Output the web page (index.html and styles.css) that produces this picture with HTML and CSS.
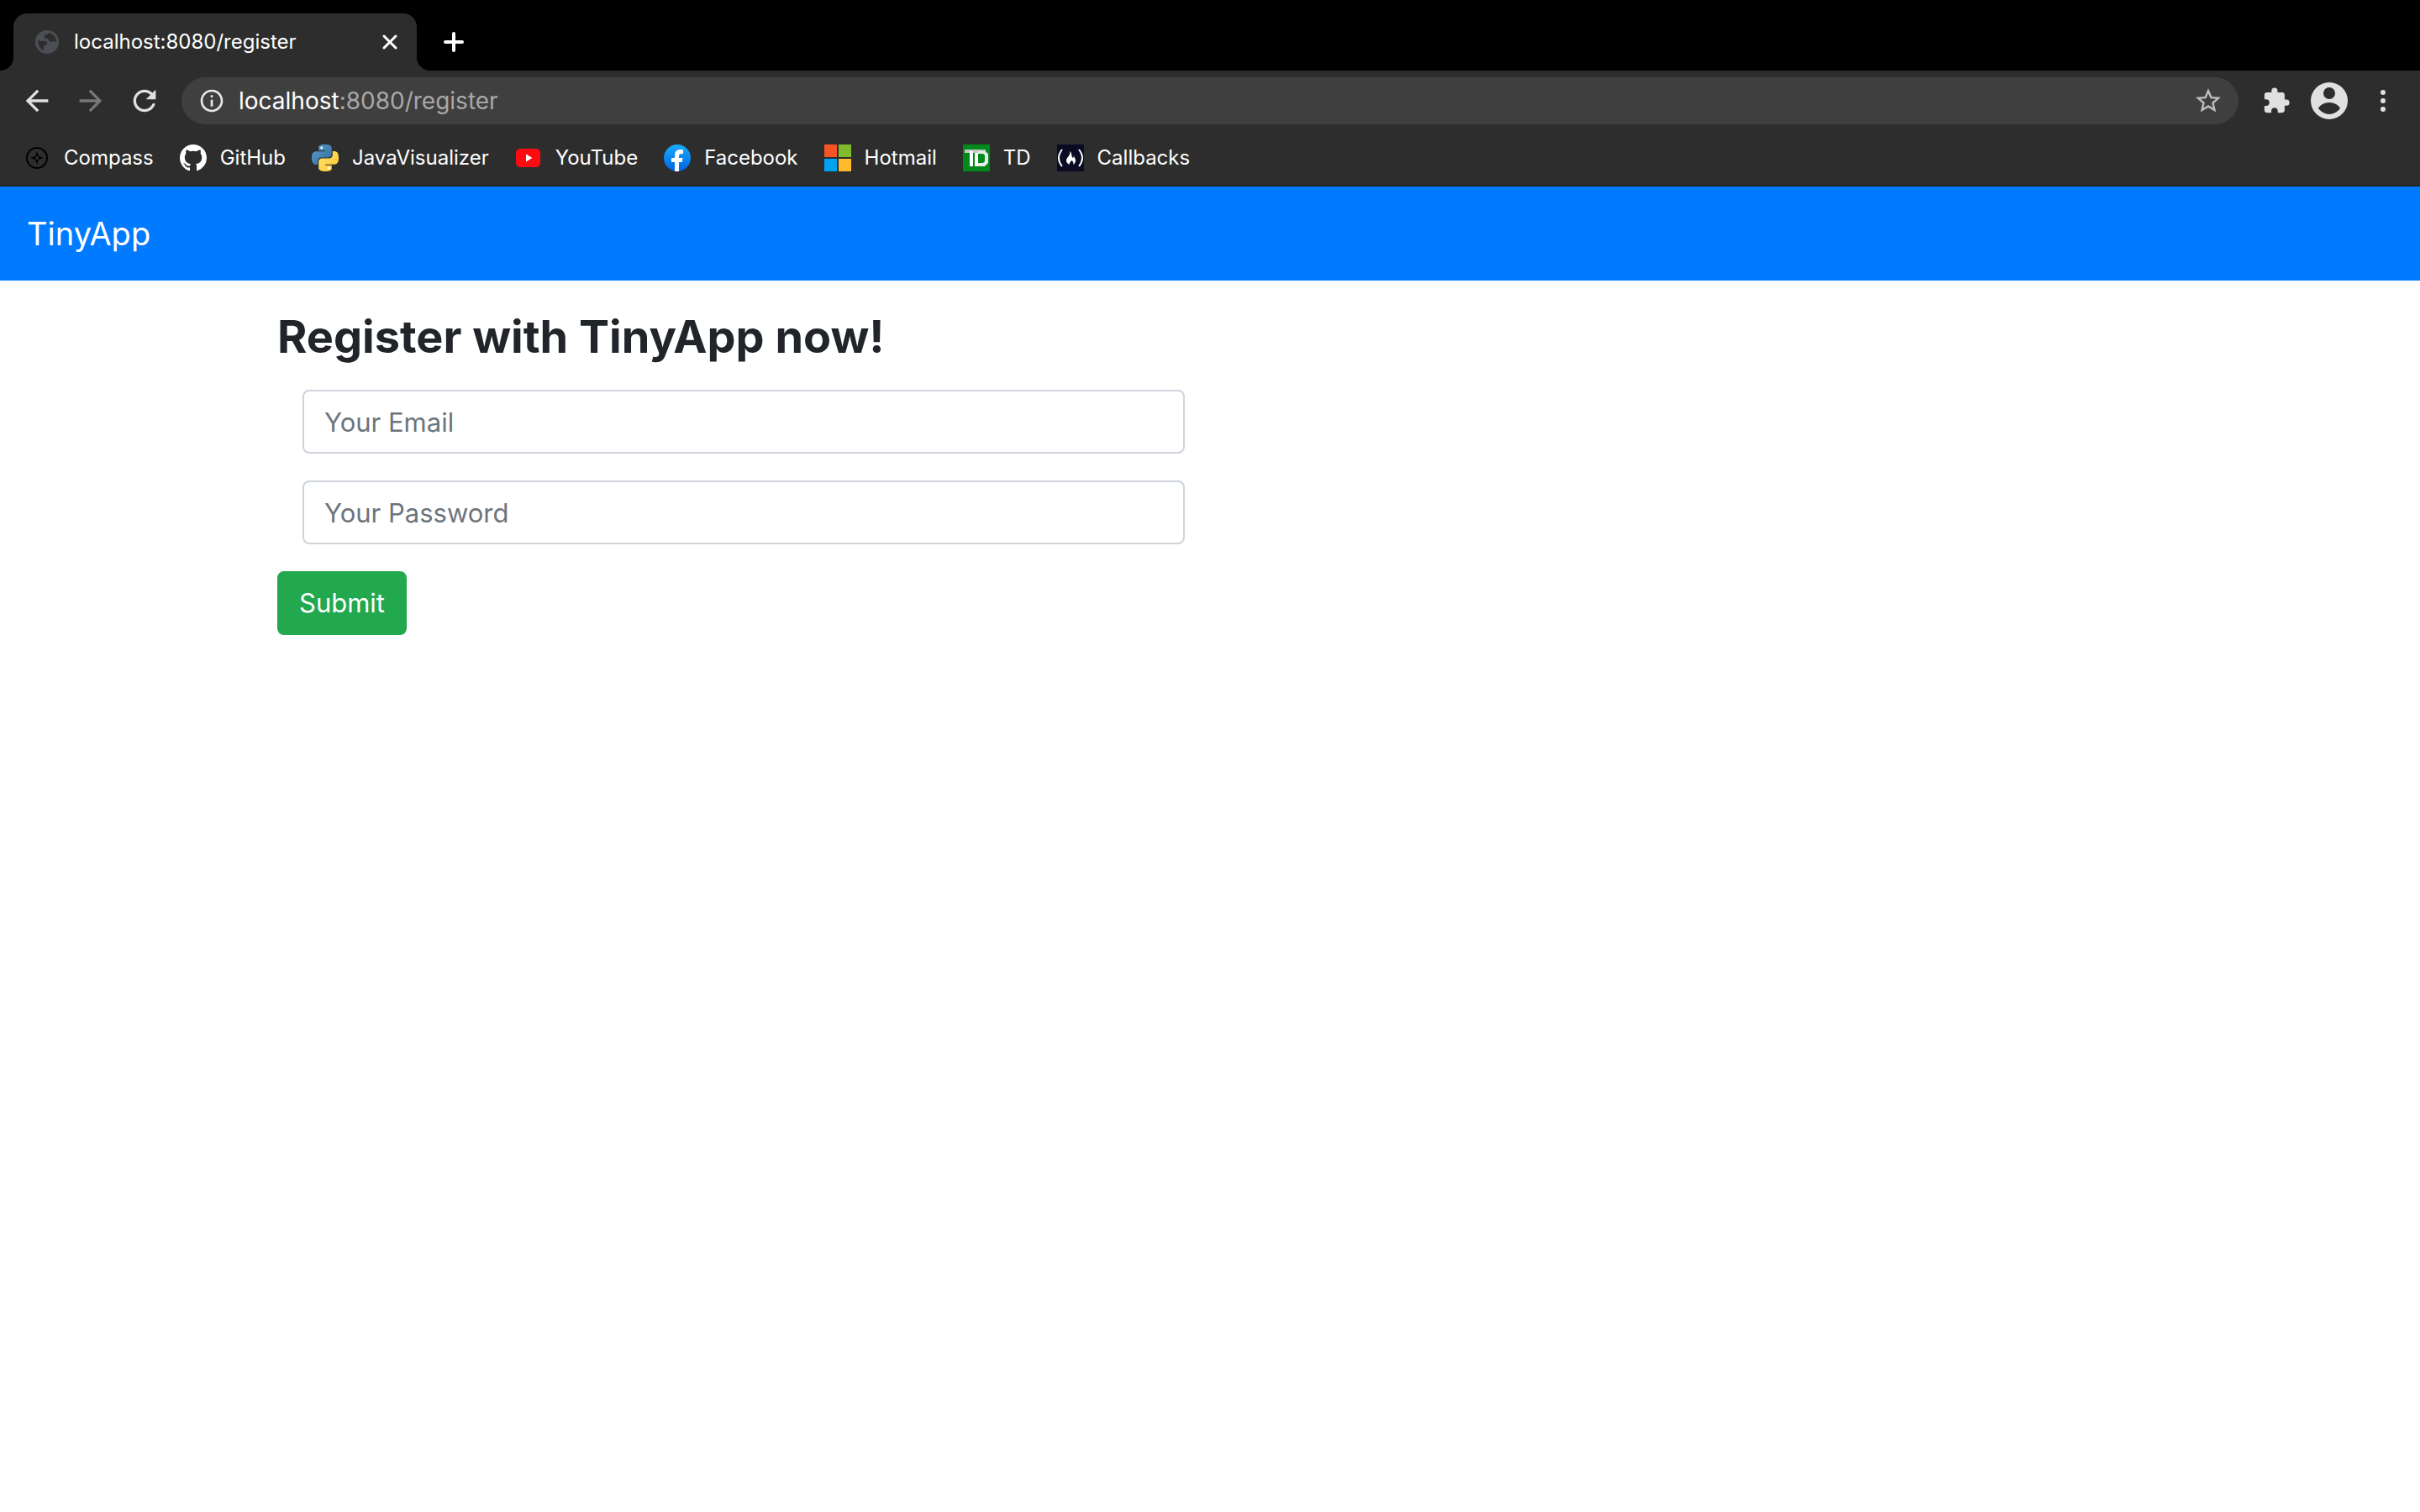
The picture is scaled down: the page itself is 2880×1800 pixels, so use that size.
FILE: index.html
```html
<!DOCTYPE html>
<html lang="en">
<head>
<meta charset="utf-8">
<title>TinyApp</title>
<link rel="stylesheet" href="styles.css">
</head>
<body>
<header class="browser">
  <div class="tabstrip">
    <div class="tab">
      <svg class="tab-icon" viewBox="0 0 28 28" aria-hidden="true"><circle cx="14" cy="14" r="14" fill="#4b4f55"/><path d="M3 12c2 1 5 1 8 1 2 0 3 1 3 3 0 1-1 2-2 2h-2v6c-4-2-7-5-7-12zM16 3c-1 1-1 2-3 2s-2 1-2 3 1 2 3 2 2 4 4 4c2 0 2-1 4-1s2 1 3 2c1-5-3-11-9-12z" fill="#2d2d2d"/></svg>
      <span class="tab-title">localhost:8080/register</span>
      <button class="icon-button tab-close" type="button" aria-label="Close tab"><svg width="20" height="20" viewBox="0 0 20 20"><path d="M3 3l14 14M17 3L3 17" stroke="#fff" stroke-width="3" stroke-linecap="round"/></svg></button>
    </div>
    <button class="icon-button new-tab" type="button" aria-label="New tab"><svg width="24" height="24" viewBox="0 0 24 24"><path d="M12 2v20M2 12h20" stroke="#fff" stroke-width="4" stroke-linecap="round"/></svg></button>
  </div>
  <div class="toolbar">
    <div class="nav-buttons">
      <button class="icon-button" type="button" aria-label="Back"><svg width="40" height="40" viewBox="0 0 24 24" fill="#e0e0e0"><path d="M20 11H7.83l5.59-5.59L12 4l-8 8 8 8 1.41-1.41L7.83 13H20z"/></svg></button>
      <button class="icon-button" type="button" aria-label="Forward"><svg width="40" height="40" viewBox="0 0 24 24" fill="#777"><path d="M4 11h12.17l-5.59-5.59L12 4l8 8-8 8-1.41-1.41L16.17 13H4z"/></svg></button>
      <button class="icon-button" type="button" aria-label="Reload"><svg width="40" height="40" viewBox="0 0 24 24" fill="#e0e0e0"><path d="M17.65 6.35C16.2 4.9 14.21 4 12 4c-4.42 0-7.99 3.58-7.99 8s3.57 8 7.99 8c3.73 0 6.84-2.55 7.73-6h-2.08c-.82 2.33-3.04 4-5.65 4-3.31 0-6-2.69-6-6s2.69-6 6-6c1.66 0 3.14.69 4.22 1.78L13 11h7V4z"/></svg></button>
    </div>
    <div class="omnibox">
      <svg width="32" height="32" viewBox="0 0 24 24" fill="#e8e8e8" aria-hidden="true"><path d="M11 7h2v2h-2zm0 4h2v6h-2zm1-9C6.48 2 2 6.48 2 12s4.48 10 10 10 10-4.48 10-10S17.52 2 12 2zm0 18c-4.41 0-8-3.59-8-8s3.59-8 8-8 8 3.59 8 8-3.59 8-8 8z"/></svg>
      <div class="url" role="textbox" aria-label="Address" contenteditable="true" spellcheck="false"><span class="url-host">localhost</span>:8080/register</div>
      <button class="icon-button" type="button" aria-label="Bookmark this page"><svg width="36" height="36" viewBox="0 0 24 24" fill="#bdbdbd"><path d="M22 9.24l-7.19-.62L12 2 9.19 8.63 2 9.24l5.46 4.73L5.82 21 12 17.27 18.18 21l-1.63-7.03zM12 15.4l-3.76 2.27 1-4.28-3.32-2.88 4.38-.38L12 6.1l1.71 4.04 4.38.38-3.32 2.88 1 4.28z"/></svg></button>
    </div>
    <div class="actions">
      <button class="icon-button" type="button" aria-label="Extensions"><svg width="34" height="34" viewBox="0 0 24 24" fill="#e0e0e0"><path d="M20.5 11H19V7c0-1.1-.9-2-2-2h-4V3.5a2.5 2.5 0 0 0-5 0V5H4c-1.1 0-1.99.9-1.99 2v3.8H3.5c1.49 0 2.7 1.21 2.7 2.7s-1.21 2.7-2.7 2.7H2V20c0 1.1.9 2 2 2h3.8v-1.5c0-1.49 1.21-2.7 2.7-2.7s2.7 1.21 2.7 2.7V22H17c1.1 0 2-.9 2-2v-4h1.5a2.5 2.5 0 0 0 0-5z"/></svg></button>
      <button class="icon-button" type="button" aria-label="Profile"><svg width="44" height="44" viewBox="0 0 44 44"><circle cx="22" cy="22" r="22" fill="#e0e0e0"/><circle cx="22" cy="13" r="7" fill="#2d2d2d"/><path d="M9 31c2-4 7-7 13-7s11 3 13 7c-3 4-8 7-13 7s-10-3-13-7z" fill="#2d2d2d"/></svg></button>
      <button class="icon-button" type="button" aria-label="Menu"><svg width="28" height="28" viewBox="0 0 28 28" fill="#e0e0e0"><circle cx="14" cy="4" r="3"/><circle cx="14" cy="14" r="3"/><circle cx="14" cy="24" r="3"/></svg></button>
    </div>
  </div>
  <nav class="bookmarks" aria-label="Bookmarks">
    <a class="bookmark" href="#"><svg width="32" height="32" viewBox="0 0 32 32"><circle cx="16" cy="16" r="12" fill="none" stroke="#000" stroke-width="2"/><path d="M16 8l2 6 6 2-6 2-2 6-2-6-6-2 6-2z" fill="#000"/><circle cx="16" cy="16" r="2" fill="#2d2d2d"/></svg>Compass</a>
    <a class="bookmark" href="#"><svg width="32" height="32" viewBox="0 0 16 16" fill="#fff"><path d="M8 0C3.58 0 0 3.58 0 8c0 3.54 2.29 6.53 5.47 7.59.4.07.55-.17.55-.38 0-.19-.01-.82-.01-1.49-2.01.37-2.53-.49-2.69-.94-.09-.23-.48-.94-.82-1.13-.28-.15-.68-.52-.01-.53.63-.01 1.08.58 1.23.82.72 1.21 1.87.87 2.33.66.07-.52.28-.87.51-1.07-1.78-.2-3.64-.89-3.64-3.95 0-.87.31-1.59.82-2.15-.08-.2-.36-1.02.08-2.12 0 0 .67-.21 2.2.82.64-.18 1.32-.27 2-.27s1.36.09 2 .27c1.53-1.04 2.2-.82 2.2-.82.44 1.1.16 1.92.08 2.12.51.56.82 1.27.82 2.15 0 3.07-1.87 3.75-3.65 3.95.29.25.54.73.54 1.48 0 1.07-.01 1.93-.01 2.2 0 .21.15.46.55.38A8.01 8.01 0 0 0 16 8c0-4.42-3.58-8-8-8z"/></svg>GitHub</a>
    <a class="bookmark" href="#"><svg width="32" height="32" viewBox="0 0 24 24"><defs><linearGradient id="py-blue" x2="1" y2="1"><stop stop-color="#5a9fd4"/><stop offset="1" stop-color="#306998"/></linearGradient><linearGradient id="py-yellow" x2="1" y2="1"><stop stop-color="#ffe873"/><stop offset="1" stop-color="#ffc331"/></linearGradient></defs><path fill="url(#py-blue)" d="M14.25.18l.9.2.73.26.59.3.45.32.34.34.25.34.16.33.1.3.04.26.02.2-.01.13V8.5l-.05.63-.13.55-.21.46-.26.38-.3.31-.33.25-.35.19-.35.14-.33.1-.3.07-.26.04-.21.02H8.77l-.69.05-.59.14-.5.22-.41.27-.33.32-.27.35-.2.36-.15.37-.1.35-.07.32-.04.27-.02.21v3.06H3.17l-.21-.03-.28-.07-.32-.12-.35-.18-.36-.26-.36-.36-.35-.46-.32-.59-.28-.73-.21-.88-.14-1.05-.05-1.23.06-1.22.16-1.04.24-.87.32-.71.36-.57.4-.44.42-.33.42-.24.4-.16.36-.1.32-.05.24-.01h.16l.06.01h8.16v-.83H6.18l-.01-2.75-.02-.37.05-.34.11-.31.17-.28.25-.26.31-.23.38-.2.44-.18.51-.15.58-.12.64-.1.71-.06.77-.04.84-.02 1.27.05z"/><path fill="url(#py-yellow)" d="M21.04 6.11l.28.06.32.12.35.18.36.27.36.35.35.47.32.59.28.73.21.88.14 1.04.05 1.23-.06 1.23-.16 1.04-.24.86-.32.71-.36.57-.4.45-.42.33-.42.24-.4.16-.36.09-.32.05-.24.02-.16-.01h-8.22v.82h5.84l.01 2.76.02.36-.05.34-.11.31-.17.29-.25.25-.31.24-.38.2-.44.17-.51.15-.58.13-.64.09-.71.07-.77.04-.84.01-1.27-.04-1.07-.14-.9-.2-.73-.25-.59-.3-.45-.33-.34-.34-.25-.34-.16-.33-.1-.3-.04-.25-.02-.2.01-.13v-5.34l.05-.64.13-.54.21-.46.26-.38.3-.32.33-.24.35-.2.35-.14.33-.1.3-.06.26-.04.21-.02.13-.01h5.84l.69-.05.59-.14.5-.21.41-.28.33-.32.27-.35.2-.36.15-.36.1-.35.07-.32.04-.28.02-.21V6.07h2.09z"/><circle cx="8.8" cy="3" r="1.1" fill="#fff"/><circle cx="15.2" cy="21.1" r="1.1" fill="#fff"/></svg>JavaVisualizer</a>
    <a class="bookmark" href="#"><svg width="32" height="32" viewBox="0 0 32 32"><rect x="1" y="5" width="29" height="22" rx="5" fill="#ff0a10"/><path d="M13 11.5v9l7.5-4.5z" fill="#fff"/></svg>YouTube</a>
    <a class="bookmark" href="#"><svg width="32" height="32" viewBox="0 0 32 32"><defs><linearGradient id="fb" x2="0" y2="1"><stop stop-color="#18acfe"/><stop offset="1" stop-color="#0163e0"/></linearGradient></defs><circle cx="16" cy="16" r="16" fill="url(#fb)"/><path d="M13 32V21H9v-5h4v-3c0-5 3-7 6-7 2 0 4 .3 4 .3V11h-2c-2 0-3 1-3 2.500V16h4.500l-.8 5H18v11z" fill="#fff"/></svg>Facebook</a>
    <a class="bookmark" href="#"><svg width="32" height="32" viewBox="0 0 32 32"><path d="M0 0h15v15H0z" fill="#f65326"/><path d="M17 0h15v15H17z" fill="#80bb2b"/><path d="M0 17h15v15H0z" fill="#00a3f0"/><path d="M17 17h15v15H17z" fill="#ffba2d"/></svg>Hotmail</a>
    <a class="bookmark" href="#"><svg width="32" height="32" viewBox="0 0 32 32"><rect width="32" height="32" fill="#008a1b"/><rect x="2" y="6" width="25" height="4" fill="#c4c8c4"/><rect x="8" y="8" width="4" height="18" fill="#fff"/><rect x="14" y="10" width="4" height="16" fill="#fff"/><path d="M18 8h8l4 3v11l-4 4h-8v-4h6l2-2v-7l-2-2h-6z" fill="#e8ece8"/></svg>TD</a>
    <a class="bookmark" href="#"><svg width="32" height="32" viewBox="0 0 32 32"><rect width="32" height="32" fill="#0a0a23"/><path d="M6 6q-8 10 0 20M26 6q8 10 0 20" fill="none" stroke="#fff" stroke-width="2"/><path d="M15 8c4 3 1 6 4 8 1-1 1-2 0-3 3 3 5 8 0 11 1-3 0-4-2-5 0 2-3 2-2 5-6-3-4-7-2-9 2-3 3-4 2-7z" fill="#fff"/></svg>Callbacks</a>
  </nav>
</header>
<nav class="navbar"><a class="brand" href="#">TinyApp</a></nav>
<main class="container">
  <h1 class="title">Register with TinyApp now!</h1>
  <form class="register">
    <div class="field"><input class="control" type="email" placeholder="Your Email" aria-label="Your Email"></div>
    <div class="field"><input class="control" type="password" placeholder="Your Password" aria-label="Your Password"></div>
    <button class="submit" type="submit">Submit</button>
  </form>
</main>
</body>
</html>
```
FILE: styles.css
```css
*, *::before, *::after { box-sizing: border-box; }

body {
  margin: 0;
  background: #fff;
  color: #212529;
  font: 31px/48px Inter, "Liberation Sans", sans-serif;
}

svg { display: block; flex: none; }
a { text-decoration: none; }

.icon-button {
  display: flex;
  padding: 0;
  border: 0;
  background: none;
}

/* Browser window */
.browser {
  background: #2d2d2d;
  color: #fff;
  border-bottom: 2px solid #222;
  font-size: 24px;
  line-height: 32px;
}

.tabstrip {
  display: flex;
  align-items: center;
  gap: 32px;
  padding: 16px 16px 0;
  background: #000;
}

.tab {
  position: relative;
  display: flex;
  align-items: center;
  gap: 18px;
  width: 480px;
  height: 68px;
  padding: 0 22px 0 26px;
  border-radius: 16px 16px 0 0;
  background: #2d2d2d;
}

/* Curved feet on both sides of the active tab */
.tab::before, .tab::after {
  content: "";
  position: absolute;
  bottom: 0;
  width: 16px;
  height: 16px;
}
.tab::before { left: -16px; background: radial-gradient(circle at 0 0, #000 16px, #2d2d2d 16px); }
.tab::after { right: -16px; background: radial-gradient(circle at 100% 0, #000 16px, #2d2d2d 16px); }

.tab-icon { width: 28px; height: 28px; }
.tab-title { flex: 1; }

.toolbar {
  display: flex;
  align-items: center;
  padding: 8px 30px 8px 24px;
}

.nav-buttons { display: flex; gap: 24px; margin-right: 24px; }

.omnibox {
  display: flex;
  align-items: center;
  flex: 1;
  gap: 16px;
  height: 56px;
  padding: 0 18px 0 20px;
  border-radius: 28px;
  background: #3f3f3f;
}

.url { flex: 1; font-size: 28px; color: #a8a8a8; }
.url-host { color: #fff; }

.actions { display: flex; align-items: center; gap: 24px; margin-left: 28px; }
.actions .icon-button:last-child { margin-left: 4px; }

.bookmarks {
  display: flex;
  gap: 31px;
  padding: 16px 28px;
}

.bookmark { display: flex; align-items: center; gap: 16px; color: #fff; }

/* Page */
.navbar { padding: 32px; background: #007bff; }
.brand { display: block; font-size: 38px; color: #fff; }

.container {
  max-width: 2280px;
  margin: 0 auto;
  padding: 34px 30px;
}

.title {
  margin: 0 0 30px;
  font-size: 54px;
  line-height: 66px;
  font-weight: 700;
}

.field { width: 50%; padding: 0 30px; margin-bottom: 32px; }

.control {
  display: block;
  width: 100%;
  height: 76px;
  padding: 12px 24px;
  border: 2px solid #ced4da;
  border-radius: 8px;
  font: inherit;
  color: #495057;
  background: #fff;
}
.control::placeholder { color: #6c757d; opacity: 1; }

.submit {
  display: block;
  padding: 12px 24px;
  border: 2px solid #22a84e;
  border-radius: 8px;
  background: #22a84e;
  color: #fff;
  font: inherit;
}
```
